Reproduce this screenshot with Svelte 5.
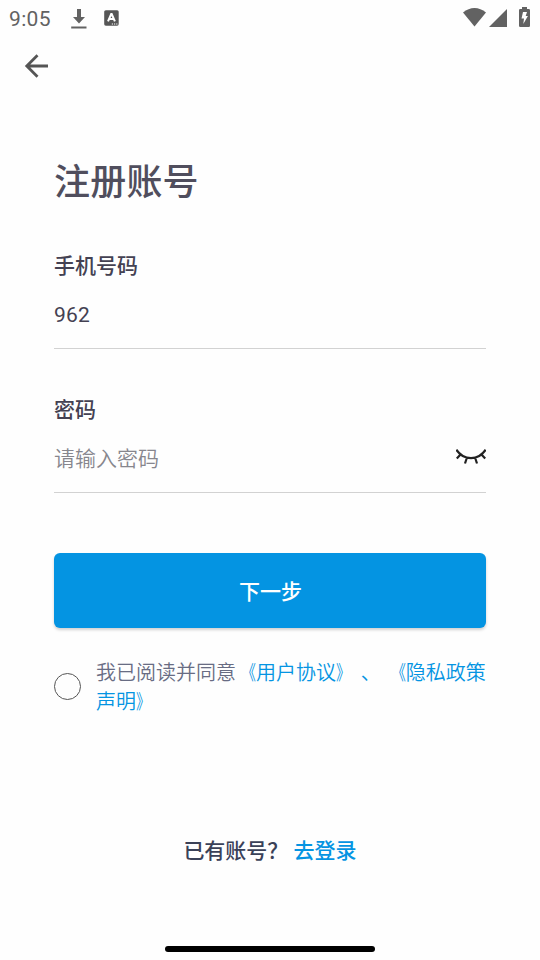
<script>
  let phone = $state('962');
  let password = $state('');
  let agreed = $state(false);
</script>

<div class="screen">
  <header class="status">
    <div class="left">
      <span class="time">9:05</span>
      <svg class="download" width="16" height="22" viewBox="0 0 16 22" fill="#626262">
        <path d="M6 0h4v8h4L8 14.6 2 8h4z" />
        <path d="M.2 17.500h15.300v2H.2z" />
      </svg>
      <svg class="badge" width="15" height="16" viewBox="0 0 15 16">
        <rect x=".2" y=".2" width="14.5" height="15.5" rx="1.6" fill="#565656" />
        <path d="M4 11.4 7.2 4h.5l3.2 7.4M5.2 9h4.5" fill="none" stroke="#fff" stroke-width="2" />
        <path d="M7.8 13.400h1.2v1.2H7.8zM10 13.400h1.2v1.2H10zM12.2 13.400h1.2v1.2h-1.2z" fill="#fff" />
      </svg>
    </div>
    <div class="right">
      <svg width="24" height="20" viewBox="0 0 24 20" fill="#626262">
        <path d="M0 5.500C3.500 2.500 7.500 1 11.500 1s8 1.500 11.500 4.500L11.500 19.500z" />
      </svg>
      <svg class="signal" width="18" height="18" viewBox="0 0 18 18" fill="#626262">
        <path d="M18 0v18H0z" />
      </svg>
      <svg class="battery" width="11" height="20" viewBox="0 0 11 20">
        <path d="M3 0h5v2h1.8Q11 2 11 3.2v15.6Q11 20 9.800 20H1.200Q0 20 0 18.800V3.200Q0 2 1.200 2H3z" fill="#626262" />
        <path d="M4 5h4L6.700 9h2.200L4.300 17l.7-5.500H2.500z" fill="#fff" />
      </svg>
    </div>
  </header>

  <nav>
    <button class="back" aria-label="返回">
      <svg width="24" height="24" viewBox="0 0 24 24" fill="none" stroke="#555" stroke-width="2.800">
        <path d="M24 12H2.800M13.500 1.300 2.800 12 13.500 22.700" />
      </svg>
    </button>
  </nav>

  <main>
    <h1>注册账号</h1>

    <label class="field">
      <span class="name">手机号码</span>
      <span class="entry"><input bind:value={phone} /></span>
    </label>

    <label class="field">
      <span class="name">密码</span>
      <span class="entry">
        <input type="password" placeholder="请输入密码" bind:value={password} />
        <svg class="eye" width="30" height="16" viewBox="0 0 30 16" fill="none" stroke="#222" stroke-width="2.200">
          <path d="M.3.700C8 12 22 12 29.700.700M5 5 .8 9.500M25 5l4.200 4.500M10.800 9 9 14.500M19.200 9 21 14.500" />
        </svg>
      </span>
    </label>

    <button class="next">下一步</button>

    <div class="terms">
      <button class="radio" class:agreed aria-label="同意" onclick={() => (agreed = !agreed)}></button>
      <p>我已阅读并同意<span class="link"><i>《</i>用户协议<i class="end">》</i> 、 <i>《</i>隐私政策<br />声明<i class="end">》</i></span></p>
    </div>

    <p class="login">已有账号？ <span class="link">去登录</span></p>
  </main>

  <div class="home"></div>
</div>

<style>
  :global(body) {
    background: #fefefe;
  }
  .screen {
    box-sizing: border-box;
    width: 540px;
    height: 960px;
    display: flex;
    flex-direction: column;
    background: #fefefe;
    font-family: Roboto, 'Noto Sans CJK SC', sans-serif;
    color: #444152;
    overflow: hidden;
  }
  svg {
    display: block;
  }
  button {
    border: 0;
    padding: 0;
    background: none;
    font-family: inherit;
  }
  h1,
  p {
    margin: 0;
  }
  .status {
    height: 36px;
    display: flex;
    justify-content: space-between;
    padding: 0 10px 0 9px;
  }
  .left,
  .right {
    display: flex;
    align-items: flex-start;
  }
  .time {
    width: 61.5px;
    padding-top: 7px;
    font-size: 21px;
    line-height: 24px;
    letter-spacing: 0.35px;
    color: #626262;
  }
  .download {
    margin-top: 9px;
  }
  .badge {
    margin: 10px 0 0 17px;
  }
  .right svg {
    margin-top: 7px;
  }
  .right .signal {
    margin: 9px 12px 0 2px;
  }
  nav {
    height: 60px;
    padding: 18px 0 0 24px;
    box-sizing: border-box;
  }
  main {
    flex: 1;
    display: flex;
    flex-direction: column;
    padding: 60px 54px 0;
  }
  h1 {
    font-size: 36px;
    font-weight: 500;
    line-height: 54px;
    letter-spacing: 0.2px;
    color: #504e5d;
  }
  .field {
    box-sizing: border-box;
    display: flex;
    flex-direction: column;
    height: 99px;
    margin-top: 40px;
    border-bottom: 1px solid #d2d2d2;
  }
  .field + .field {
    margin-top: 45px;
  }
  .name {
    font-size: 21px;
    line-height: 32px;
    font-weight: 500;
    color: #444152;
  }
  .entry {
    display: flex;
    height: 32px;
    margin-top: 17px;
  }
  input {
    flex: 1;
    min-width: 0;
    border: 0;
    padding: 0;
    outline: 0;
    background: none;
    font: 21px/32px Roboto, 'Noto Sans CJK SC', sans-serif;
    letter-spacing: 0.2px;
    color: #444152;
  }
  input::placeholder {
    color: #87868d;
    font-weight: 350;
    letter-spacing: 0;
  }
  .eye {
    margin-top: 5.5px;
  }
  .next {
    height: 75px;
    flex: none;
    margin-top: 60px;
    padding: 0 0 2px 1px;
    border-radius: 6px;
    background: #0494e2;
    box-shadow: 0 2px 3px rgba(0, 0, 0, 0.18);
    font-size: 21px;
    font-weight: 500;
    color: #fff;
  }
  .terms {
    display: flex;
    align-items: center;
    gap: 15px;
    height: 58px;
    margin-top: 29px;
    font-size: 20px;
    line-height: 29px;
    color: #686c83;
    white-space: nowrap;
  }
  .terms p {
    padding-top: 4px;
    font-weight: 350;
  }
  .terms i {
    display: inline-block;
    font-style: normal;
    transform: scaleX(0.72);
    transform-origin: right;
  }
  .terms .end {
    transform-origin: left;
  }
  .radio {
    box-sizing: border-box;
    width: 27px;
    height: 27px;
    flex: none;
    border: 1px solid #555;
    border-radius: 50%;
  }
  .agreed {
    background: #0494e2;
  }
  .link {
    color: #0494e2;
  }
  .login {
    margin-top: 120px;
    text-align: center;
    font-size: 21px;
    line-height: 32px;
    font-weight: 500;
    color: #3a4158;
  }
  .home {
    align-self: center;
    width: 210px;
    height: 6px;
    margin-bottom: 8px;
    border-radius: 3px;
    background: #000;
  }
</style>
